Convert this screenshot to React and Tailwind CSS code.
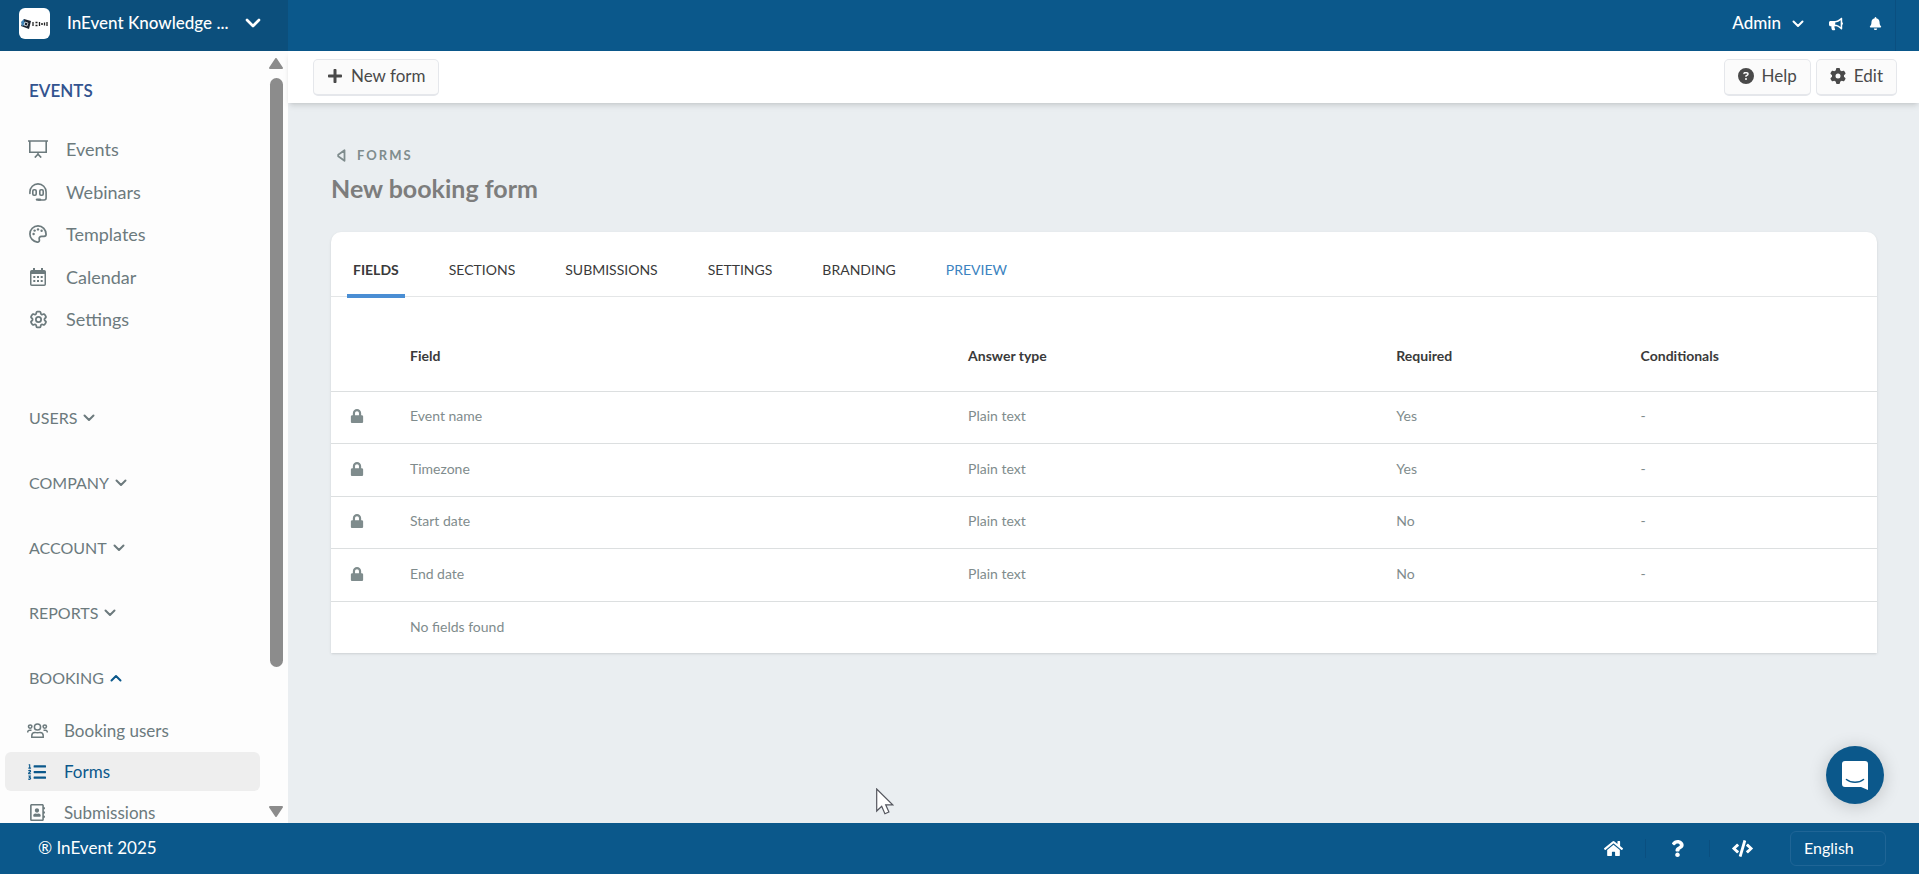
import { FaBell, FaBullhorn, FaCode, FaHome, FaListOl, FaLock, FaPlus, FaQuestion, FaRegAddressBook } from "react-icons/fa";
import { FaCircleQuestion, FaGear } from "react-icons/fa6";
import { HiOutlineCog6Tooth } from "react-icons/hi2";

/* Sidebar icons */
const ScreenIcon = () => (
    <svg viewBox="0 0 20 18" className="h-[18px] w-5" fill="none" stroke="currentColor" strokeWidth="1.6" aria-hidden="true">
        <path d="M0 1h20M1.8 1v11.2h16.4V1M10 12.2v2M6.8 17.6l3.2-3.4 3.2 3.4" />
    </svg>
)

const HeadsetIcon = () => (
    <svg viewBox="0 0 18 18" className="size-[18px]" fill="none" stroke="currentColor" strokeWidth="1.6" strokeLinecap="round" aria-hidden="true">
        <path d="M.9 10.5V9a8.1 8.1 0 0 1 16.2 0v6a2 2 0 0 1-2 2H9.6" />
        <rect x="3.8" y="6.8" width="3.4" height="5.4" rx="1.2" />
        <rect x="10.8" y="6.8" width="3.4" height="5.4" rx="1.2" />
        <path d="M8 16.6h3" strokeWidth="2.4" />
    </svg>
)

const PaletteIcon = () => (
    <svg viewBox="0 0 18 18" className="size-[18px]" fill="none" stroke="currentColor" strokeWidth="1.7" aria-hidden="true">
        <path d="M9 .9C4.5.9.9 4.5.9 9c0 4.3 3.2 7.5 7.3 8.1 1.6.2 2.5-1.2 2.1-2.6-.5-1.7.5-3.2 2.3-3.2h2.5c1.2 0 2-.9 2-2C17.1 4.6 13.5.9 9 .9z" />
        <g fill="currentColor" stroke="none">
            <circle cx="4.6" cy="9" r="1.2" />
            <circle cx="5.6" cy="5.6" r="1.2" />
            <circle cx="9" cy="4.4" r="1.2" />
            <circle cx="12.6" cy="5.8" r="1.2" />
        </g>
    </svg>
)

const CalendarIcon = () => (
    <svg viewBox="0 0 16 18" className="h-[18px] w-4" fill="currentColor" aria-hidden="true">
        <path d="M3 0h2v2h6V0h2v2h1.2A1.8 1.8 0 0 1 16 3.8v12.4a1.8 1.8 0 0 1-1.8 1.8H1.8A1.8 1.8 0 0 1 0 16.2V3.8A1.8 1.8 0 0 1 1.8 2H3zM1.5 6v10.5h13V6z" fillRule="evenodd" />
        <path d="M3.3 8h2v2h-2zM7 8h2v2H7zM10.7 8h2v2h-2zM3.3 12h2v2h-2zM7 12h2v2H7zM10.7 12h2v2h-2z" />
    </svg>
)

const UsersIcon = () => (
    <svg viewBox="0 0 21 15" className="h-[15px] w-[21px]" fill="none" stroke="currentColor" strokeWidth="1.5" aria-hidden="true">
        <circle cx="10.5" cy="4" r="3.1" />
        <circle cx="3.2" cy="3.6" r="1.7" />
        <circle cx="17.8" cy="3.6" r="1.7" />
        <path d="M4.8 14.2v-1.6c0-1.9 1.4-3.2 3.1-3.2 1 .5 4.2.5 5.2 0 1.7 0 3.1 1.3 3.1 3.2v1.6z" />
        <path d="M.7 9.4c0-1.4.8-2.1 2-2.1h1.8M20.3 9.4c0-1.4-.8-2.1-2-2.1h-1.8" />
    </svg>
)

const Chevron = ({ className }) => (
    <svg viewBox="0 0 12 8" className={className} fill="none" stroke="currentColor" strokeLinecap="round" strokeLinejoin="round" aria-hidden="true">
        <path d="M1.5 1.5L6 6l4.5-4.5" />
    </svg>
)

const eventLinks = [
    { label: "Events", icon: <ScreenIcon /> },
    { label: "Webinars", icon: <HeadsetIcon /> },
    { label: "Templates", icon: <PaletteIcon /> },
    { label: "Calendar", icon: <CalendarIcon /> },
    { label: "Settings", icon: <HiOutlineCog6Tooth className="size-[21px]" strokeWidth="2" /> },
]

const bookingLinks = [
    { label: "Booking users", icon: <UsersIcon /> },
    { label: "Forms", icon: <FaListOl className="size-[18px]" />, active: true },
    { label: "Submissions", icon: <FaRegAddressBook className="size-[17px]" /> },
]

const tabs = ["FIELDS", "SECTIONS", "SUBMISSIONS", "SETTINGS", "BRANDING", "PREVIEW"]

const fields = [
    { name: "Event name", type: "Plain text", required: "Yes" },
    { name: "Timezone", type: "Plain text", required: "Yes" },
    { name: "Start date", type: "Plain text", required: "No" },
    { name: "End date", type: "Plain text", required: "No" },
]

function Header() {
    return (
        <header className="flex h-[51px] shrink-0 bg-[#0b588b] text-[17px] text-white">
            <button type="button" className="flex w-72 items-center bg-[#0c4f7c] pb-1 pl-[19px]">
                <span className="flex size-[31px] items-center justify-center rounded-md bg-white">
                    <svg viewBox="0 0 29 12" className="h-3 w-[29px]" aria-hidden="true">
                        <path d="M4 1l7 2-2 8-8-3z" fill="#1c2430" />
                        <path d="M1 4l3-3 1 6-3 1z" fill="#3f82b5" />
                        <path d="M5 4l3 1-1 3-3-1z" fill="none" stroke="#fff" strokeWidth=".7" />
                        <path d="M13 4v4M15.5 4.5h2M15.5 7.5h2M19.5 4v4M21 6h2M24.5 4.5v3M27 4v4" stroke="#222" strokeWidth="1.3" />
                    </svg>
                </span>
                <span className="ml-[17px] pb-px font-medium">InEvent Knowledge ...</span>
                <Chevron className="ml-[17px] w-4 stroke-2" />
            </button>
            <div className="mr-[23px] ml-auto flex items-center border-r border-[#0a4f80] pr-[13px] pb-1">
                <button type="button" className="flex items-center gap-[11px] font-medium">
                    <span className="pb-px">Admin</span>
                    <Chevron className="w-3 stroke-2" />
                </button>
                <button type="button" aria-label="Announcements" className="ml-[25px]">
                    <FaBullhorn className="size-[14px]" />
                </button>
                <button type="button" aria-label="Notifications" className="ml-[26px]">
                    <FaBell className="size-[13px]" />
                </button>
            </div>
        </header>
    )
}

function Sidebar() {
    return (
        <aside className="flex w-72 shrink-0 overflow-hidden bg-[#fdfdfd] text-[#6c7a7d]">
            <nav className="min-w-0 flex-1">
                {/* Events */}
                <h2 className="mt-7 ml-[29px] text-[17px] leading-6 font-semibold text-[#32538f]">EVENTS</h2>
                <ul className="mt-[25px] text-lg">
                    {eventLinks.map(({ label, icon }) => (
                        <li key={label} className="h-[42px] even:h-[43px]">
                            <a href="#" className="flex h-full items-center pl-[27px]">
                                <span className="mr-[17px] flex w-[22px] justify-center">{icon}</span>
                                {label}
                            </a>
                        </li>
                    ))}
                </ul>

                {/* Collapsed groups */}
                <div className="mt-[45px]">
                    {["USERS", "COMPANY", "ACCOUNT", "REPORTS"].map(name => (
                        <button key={name} type="button" className="flex h-[65px] items-center gap-[6px] pl-[29px] text-base">
                            {name}
                            <Chevron className="w-3 stroke-2" />
                        </button>
                    ))}
                    <button type="button" className="flex h-[65px] items-center gap-[6px] pl-[29px] text-base" aria-expanded="true">
                        BOOKING
                        <Chevron className="w-3 rotate-180 stroke-2 text-[#0b588b]" />
                    </button>
                </div>

                {/* Booking */}
                <ul className="flex flex-col gap-[2px] pt-px pr-[9px] pl-[5px] text-[17px]">
                    {bookingLinks.map(({ label, icon, active }) => (
                        <li key={label}>
                            <a
                                href="#"
                                className={`flex h-[39px] items-center rounded-md pl-[21px] ${active ? "bg-[#eeeeee] text-[#0b588b]" : ""}`}
                            >
                                <span className="mr-4 flex w-[22px] justify-center">{icon}</span>
                                {label}
                            </a>
                        </li>
                    ))}
                </ul>
            </nav>

            {/* Scrollbar */}
            <div className="flex w-[19px] flex-col items-center justify-between pt-[7px] pr-[5px] pb-[6px] text-[#8c8c8c]" aria-hidden="true">
                <svg viewBox="0 0 14 11" className="h-[11px] w-[14px]" fill="currentColor" stroke="currentColor" strokeWidth="2" strokeLinejoin="round">
                    <path d="M7 1l6 9H1z" />
                </svg>
                <div className="mt-[9px] w-[13px] flex-[589] rounded-full bg-[#8c8c8c]" />
                <div className="flex-[139]" />
                <svg viewBox="0 0 14 11" className="h-[11px] w-[14px]" fill="currentColor" stroke="currentColor" strokeWidth="2" strokeLinejoin="round">
                    <path d="M7 10L1 1h12z" />
                </svg>
            </div>
        </aside>
    )
}

function ToolButton({ icon, children }) {
    return (
        <button
            type="button"
            className="flex h-[37px] items-center gap-2 rounded-[5px] border border-b-2 border-gray-200 bg-[#fbfbfb] px-[13px] pb-px text-[17px] text-[#4a4a4a]"
        >
            {icon}
            {children}
        </button>
    )
}

function FieldsTable() {
    return (
        <table className="w-full table-fixed text-left text-sm text-[#7f8c8d]">
            <colgroup>
                <col className="w-[60px]" />
                <col className="w-[36.1%]" />
                <col className="w-[27.7%]" />
                <col className="w-[15.8%]" />
                <col />
            </colgroup>
            <thead>
                <tr className="h-[94px] text-[#3a3a3a]">
                    <th aria-label="Locked" />
                    <th className="pt-6 pl-[19px] font-bold">Field</th>
                    <th className="pt-6 pl-[19px] font-bold">Answer type</th>
                    <th className="pt-6 pl-[19px] font-bold">Required</th>
                    <th className="pt-6 pl-[19px] font-bold">Conditionals</th>
                </tr>
            </thead>
            <tbody>
                {fields.map(({ name, type, required }) => (
                    <tr key={name} className="h-[52px] border-t border-[#dcdfe0] even:h-[53px]">
                        <td className="pb-[2px] pl-[19px]"><FaLock className="size-[14px]" /></td>
                        <td className="pb-[2px] pl-[19px]">{name}</td>
                        <td className="pb-[2px] pl-[19px]">{type}</td>
                        <td className="pb-[2px] pl-[19px]">{required}</td>
                        <td className="pb-[2px] pl-[19px]">-</td>
                    </tr>
                ))}
                <tr className="h-[52px] border-t border-[#dcdfe0]">
                    <td />
                    <td colSpan={4} className="pl-[19px]">No fields found</td>
                </tr>
            </tbody>
        </table>
    )
}

function Main() {
    return (
        <div className="flex min-w-0 flex-1 flex-col bg-[#eaeef1]">
            {/* Toolbar */}
            <div className="flex h-[52px] shrink-0 items-center gap-[5px] bg-white pr-[22px] pl-[25px] shadow-md">
                <ToolButton icon={<FaPlus className="size-4" />}>New form</ToolButton>
                <div className="flex-1" />
                <ToolButton icon={<FaCircleQuestion className="size-4" />}>Help</ToolButton>
                <ToolButton icon={<FaGear className="size-4" />}>Edit</ToolButton>
            </div>

            <main className="pt-10 pr-[42px] pl-[43px]">
                <a href="#" className="ml-[6px] flex items-center gap-[11px] text-[13px] leading-6 font-bold tracking-[2px] text-[#7f8c8d]">
                    <svg viewBox="0 0 9 13" className="h-[13px] w-[9px]" fill="none" stroke="currentColor" strokeWidth="1.8" strokeLinejoin="round" aria-hidden="true">
                        <path d="M7.5 1.2v10.6L1.2 7.3V5.7z" />
                    </svg>
                    FORMS
                </a>
                <h1 className="mt-[3px] text-[25px] leading-9 font-bold text-[#7d7d7d]">New booking form</h1>

                {/* Card */}
                <section className="mt-[26px] rounded-t-[10px] bg-white shadow">
                    <nav className="flex gap-[38px] border-b border-[#e4e6e7] px-4 text-sm text-[#3a3a3a]">
                        {tabs.map((tab, i) => (
                            <a
                                key={tab}
                                href="#"
                                className={`-mb-[2px] border-b-4 px-[6px] pt-7 pb-[14px] ${i === 0 ? "border-[#4a8ed4] font-bold" : "border-transparent"} ${tab === "PREVIEW" ? "text-[#3b83c0]" : ""}`}
                            >
                                {tab}
                            </a>
                        ))}
                    </nav>
                    <FieldsTable />
                </section>
            </main>
        </div>
    )
}

function Footer() {
    return (
        <footer className="flex h-[51px] shrink-0 items-center bg-[#0b588b] pr-[33px] pl-[38px] text-white">
            <p className="pb-[2px] text-[17px]">® InEvent 2025</p>
            <div className="ml-auto flex items-center divide-x divide-[#0a4f80]">
                <a href="#" aria-label="Home" className="flex w-16 justify-center"><FaHome className="size-[19px]" /></a>
                <a href="#" aria-label="Help" className="flex w-16 justify-center"><FaQuestion className="size-[17px]" /></a>
                <a href="#" aria-label="Developers" className="flex w-16 justify-center"><FaCode className="size-[21px]" /></a>
            </div>
            <select
                aria-label="Language"
                className="ml-4 h-[35px] w-24 appearance-none rounded-md border border-[#1f6596] bg-transparent px-[13px] pb-[2px] text-base text-white"
            >
                <option>English</option>
            </select>
        </footer>
    )
}

export default function App() {
    return (
        <div className="relative flex h-screen flex-col overflow-hidden font-['Lato',sans-serif]">
            <Header />
            <div className="flex min-h-0 flex-1">
                <Sidebar />
                <Main />
            </div>
            <Footer />

            {/* Chat launcher */}
            <button
                type="button"
                aria-label="Open chat"
                className="absolute right-[35px] bottom-[70px] flex size-[58px] items-center justify-center rounded-full bg-[#0b588b] shadow-[0_2px_18px_rgba(0,0,0,0.18)]"
            >
                <svg viewBox="0 0 26 29" className="h-[29px] w-[26px]" aria-hidden="true">
                    <path d="M3 0h20a3 3 0 0 1 3 3v26l-7-3H3a3 3 0 0 1-3-3V3a3 3 0 0 1 3-3z" fill="#fff" />
                    <path d="M4.5 18.5c4.5 3.6 12.5 3.6 17 0" fill="none" stroke="#0b588b" strokeWidth="1.6" strokeLinecap="round" />
                </svg>
            </button>

            {/* Pointer */}
            <svg viewBox="0 0 18 27" className="pointer-events-none absolute top-[788px] left-[876px] h-[27px] w-[18px]" aria-hidden="true">
                <path d="M.7 1v22l5-4.7 3.2 7.4 4-1.7-3.2-7.2h7z" fill="#fff" stroke="#54565e" strokeWidth="1.2" />
            </svg>
        </div>
    )
}
